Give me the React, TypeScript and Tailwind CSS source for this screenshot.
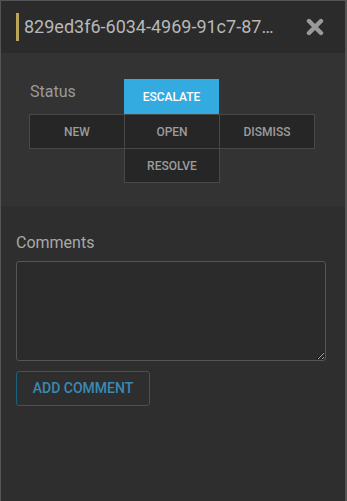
import React from 'react';

const CloseIcon = () => (
    <svg width="18" height="18" viewBox="0 0 18 18" className="text-[#9a9a9a]">
        <path d="M3 3 L15 15 M15 3 L3 15" stroke="currentColor" strokeWidth="4.4" strokeLinecap="round" fill="none" />
    </svg>
);

const cell = 'h-[35px] flex items-center justify-center text-[12px] font-medium uppercase';
const statusBtn = `${cell} w-[96px] bg-[#262626] border border-[#484848] text-[#9c9c9c]`;

export default function App() {
    return (
        <div className="w-[347px] h-[501px] bg-[#2e2e2e] border-l border-t border-r-2 border-[#545454] flex flex-col" style={{ fontFamily: 'Roboto, "Noto Sans", sans-serif' }}>
            {/* Header */}
            <div className="h-[52px] bg-[#2b2b2b] flex items-center pl-[15px] pr-[21px]">
                <div className="w-[3px] h-[28px] bg-[#b9a45a] mr-[5px]" />
                <div className="w-[250px] truncate text-[18px] text-[#b8b8b8] leading-[22px]">
                    829ed3f6-6034-4969-91c7-87a2f1c3b4e5
                </div>
                <div className="ml-auto flex items-center">
                    <CloseIcon />
                </div>
            </div>

            {/* Status */}
            <div className="bg-[#333333] pt-[26px] pb-[23px] pl-[28px]">
                <div className="grid grid-cols-[95px_95px_95px]">
                    <div className="text-[16px] text-[#9a9a9a] leading-none pt-[5px] pl-px">Status</div>
                    <div className={`${cell} w-[95px] bg-[#33abe0] text-white font-bold`}>Escalate</div>
                    <div />
                    <div className={statusBtn}>New</div>
                    <div className={statusBtn}>Open</div>
                    <div className={statusBtn}>Dismiss</div>
                    <div />
                    <div className={`${statusBtn} -mt-px`}>Resolve</div>
                    <div />
                </div>
            </div>

            {/* Comments */}
            <div className="flex flex-col px-[15px] pt-[27px]">
                <label className="text-[16px] text-[#a8a8a8] leading-[20px]">Comments</label>
                <textarea className="mt-[8px] w-[310px] h-[100px] bg-[#2b2b2b] border border-[#555555] rounded-[3px] resize-y outline-none text-[#ccc] p-2" />
                <button className="mt-[10px] w-[134px] h-[35px] border border-[#1d5f80] rounded-[3px] text-[#3a8ab3] text-[14px] font-medium uppercase">
                    Add Comment
                </button>
            </div>
        </div>
    );
}
